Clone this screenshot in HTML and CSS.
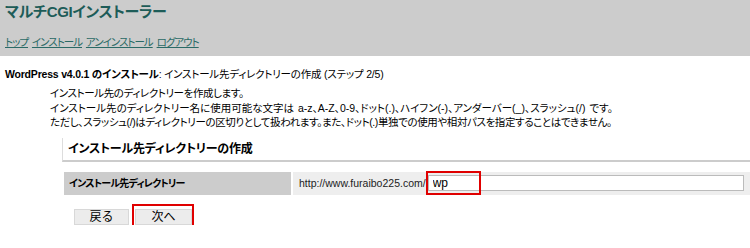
FILE: index.html
```html
<!DOCTYPE html>
<html lang="ja">
<head>
    <meta charset="UTF-8">
    <title>マルチCGIインストーラー</title>
    <link rel="stylesheet" href="styles.css">
</head>
<body>
    <div class="header">
        <h1 class="title">マルチCGIインストーラー</h1>
        <div class="nav">
            <a href="#">トップ</a>
            <a href="#">インストール</a>
            <a href="#">アンインストール</a>
            <a href="#">ログアウト</a>
        </div>
    </div>

    <div class="content">
        <p class="step"><b>WordPress v4.0.1 のインストール</b>: インストール先ディレクトリーの作成 (ステップ 2/5)</p>

        <p class="intro">
            インストール先のディレクトリーを作成します。<br>
            <span class="chars">インストール先のディレクトリー名に使用可能な文字は a-z、A-Z、0-9、ドット(.)、ハイフン(-)、アンダーバー(_)、スラッシュ(/) です。</span><br>
            ただし、スラッシュ(/)はディレクトリーの区切りとして扱われます。また、ドット(.)単独での使用や相対パスを指定することはできません。
        </p>

        <h2 class="section">インストール先ディレクトリーの作成</h2>

        <div class="form-row">
            <div class="label">インストール先ディレクトリー</div>
            <div class="value">
                <span class="url">http://www.furaibo225.com/</span>
                <span class="input-wrap">
                    <input type="text" value="wp">
                    <span class="mark mark-input"></span>
                </span>
            </div>
        </div>

        <div class="buttons">
            <button type="button">戻る</button>
            <span class="btn-wrap">
                <button type="button">次へ</button>
                <span class="mark mark-btn"></span>
            </span>
        </div>
    </div>
</body>
</html>
```

FILE: styles.css
```css
body {
    margin: 0;
    font-family: "Liberation Sans", "Noto Sans CJK JP", sans-serif;
    font-size: 12px;
    color: #000;
    background: #fff;
    font-feature-settings: "palt";
}

.header {
    background: #cccccc;
    height: 56px;
    padding: 2px 5px 0;
    box-sizing: border-box;
}

.title {
    margin: 0;
    font-size: 15px;
    line-height: 20px;
    letter-spacing: -0.3px;
    color: #1d5c58;
}

.nav {
    margin-top: 12px;
    font-size: 10.5px;
    line-height: 16px;
    letter-spacing: -1px;
}

.nav a {
    color: #2a6a66;
    margin-right: 2px;
}

.content {
    padding: 0 0 0 5px;
}

.step {
    margin: 11px 0 0;
    font-size: 10.5px;
    line-height: 14px;
    letter-spacing: -0.2px;
}

.intro {
    margin: 5px 0 0 45px;
    font-size: 10.5px;
    line-height: 14.5px;
    letter-spacing: -0.4px;
}

.intro .chars {
    letter-spacing: 0;
    word-spacing: 1px;
}

.section {
    margin: 8px 0 0 57px;
    height: 22px;
    padding-left: 5px;
    border-left: 1px solid #dddddd;
    border-bottom: 2px solid #cccccc;
    font-size: 12px;
    line-height: 22px;
    letter-spacing: -0.2px;
}

.form-row {
    display: flex;
    margin: 10px 0 0 59px;
    height: 23px;
    gap: 2px;
}

.label {
    width: 227px;
    background: #cccccc;
    font-weight: bold;
    font-size: 10px;
    letter-spacing: -0.8px;
    line-height: 23px;
    padding-left: 5px;
    box-sizing: border-box;
}

.value {
    flex: 1;
    background: #eeeeee;
    display: flex;
    align-items: center;
    padding-left: 6px;
    padding-right: 6px;
    font-size: 10.5px;
}

.url {
    color: #222;
    margin-right: 2px;
}

.input-wrap {
    position: relative;
    flex: 1;
    display: flex;
}

.input-wrap input {
    flex: 1;
    height: 16px;
    box-sizing: border-box;
    border: 1px solid #bbbbbb;
    padding: 0 4px;
    font-family: inherit;
    font-size: 12px;
    background: #fff;
}

.mark {
    position: absolute;
    border: 2px solid #e00000;
}

.mark-input {
    left: -2px;
    top: -4px;
    width: 51px;
    height: 20px;
}

.buttons {
    display: flex;
    margin: 14px 0 0 69px;
    gap: 6px;
}

.buttons button {
    height: 16px;
    padding: 0;
    width: 55px;
    border: 1px solid #d8d8d8;
    background: #ececec;
    font-family: inherit;
    font-size: 12px;
    line-height: 14px;
}

.btn-wrap {
    position: relative;
    display: flex;
}

.btn-wrap button {
    width: 57px;
}

.mark-btn {
    left: -3px;
    top: -5px;
    width: 58px;
    height: 22px;
}
```
